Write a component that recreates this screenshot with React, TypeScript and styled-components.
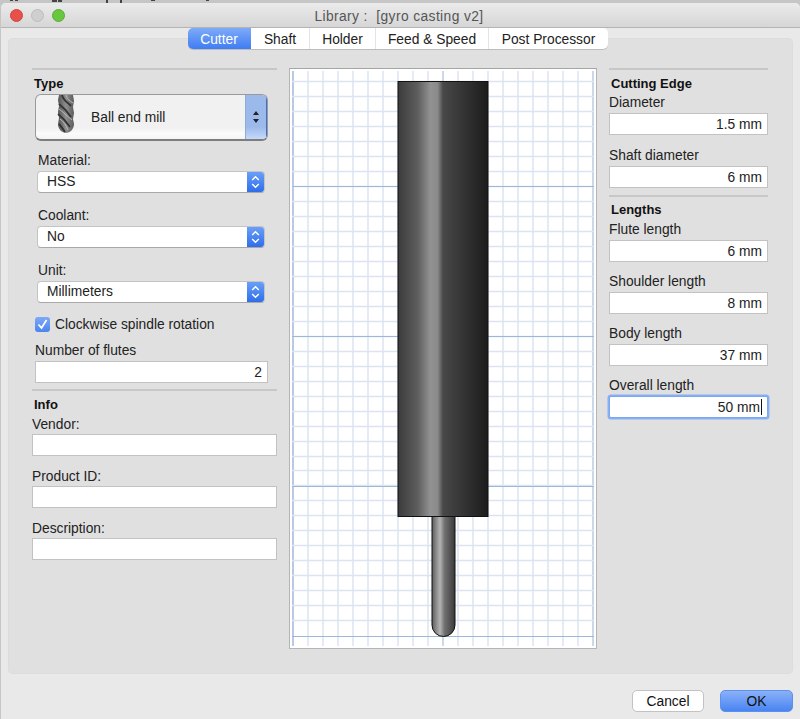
import styled, { createGlobalStyle } from "styled-components";

const GlobalStyle = createGlobalStyle`
  html, body {
    margin: 0;
    padding: 0;
    background: #c6c6c6;
  }
  * {
    box-sizing: border-box;
  }
`;

const TABS = [
  { label: "Cutter", width: 63, active: true },
  { label: "Shaft", width: 59 },
  { label: "Holder", width: 66 },
  { label: "Feed & Speed", width: 113 },
  { label: "Post Processor", width: 119 },
];

const SELECTS = [
  { label: "Material:", value: "HSS" },
  { label: "Coolant:", value: "No" },
  { label: "Unit:", value: "Millimeters" },
];

const MINOR_X = Array.from({ length: 21 }, (_, i) => i * 15 + 3);
const MINOR_Y = Array.from({ length: 37 }, (_, i) => Math.round(i * 14.98 + 12) + 0.5);
const MAJOR_Y = [117.5, 267.5, 417.5, 567.5];

const App = () => {
  return (
    <Screen>
      <GlobalStyle />
      <DesktopPeek viewBox="0 0 800 3">
        <path d="M10 0h3v1h-3zM15 0h3v1h-3zM52 0h5v2h-5zM58 0h4v2h-4zM106 0h2v3h-2zM120 0h2v3h-2zM151 0h4v1h-4zM206 0h3v1h-3z" fill="#444" />
      </DesktopPeek>
      <Window>
        <TitleBar>
          <Lights>
            <Light $color="#e8504a" $edge="#d0433d" />
            <Light $color="#cfcfcf" $edge="#bcbcbc" />
            <Light $color="#68c63f" $edge="#58ad34" />
          </Lights>
          <Title>Library :  [gyro casting v2]</Title>
        </TitleBar>

        <TabBar>
          {TABS.map((tab) => (
            <Tab key={tab.label} $active={tab.active} $width={tab.width}>
              {tab.label}
            </Tab>
          ))}
        </TabBar>

        <Panel>
          <LeftColumn>
            <Divider />
            <Heading $indent={2}>Type</Heading>
            <ToolPopup>
              <FluteIcon viewBox="0 0 18 38">
                <defs>
                  <linearGradient id="fluteBody" x1="0" x2="1" y1="0" y2="0">
                    <stop offset="0" stopColor="#555" />
                    <stop offset="0.5" stopColor="#8f8f8f" />
                    <stop offset="1" stopColor="#5a5a5a" />
                  </linearGradient>
                </defs>
                <path d="M2 0h14l1 6-1 6 1 6-1 6 1 5c0 5-4 9-8 9s-8-4-8-9l1-6-1-6 1-6-1-6z" fill="url(#fluteBody)" />
                <path d="M5 0c1 5 5 7 9 11M2 9c4 3 8 7 12 13M1 19c4 3 8 7 12 13M2 29c2 2 4 5 6 8" fill="none" stroke="#333" strokeWidth="1.8" />
                <path d="M9 0c1 4 4 6 7 8M2 14c4 3 8 7 13 11M3 24c3 2 6 6 8 11" fill="none" stroke="#b8b8b8" strokeWidth="1" />
              </FluteIcon>
              <ToolName>Ball end mill</ToolName>
              <PopupStepper>
                <svg width="8" height="14" viewBox="0 0 8 14">
                  <path d="M4 1l3 4H1zM4 13l3-4H1z" fill="#222" />
                </svg>
              </PopupStepper>
            </ToolPopup>

            {SELECTS.map((select, i) => (
              <div key={select.label}>
                <SelectLabel $top={i === 0 ? 11 : 14}>{select.label}</SelectLabel>
                <Select>
                  <SelectValue>{select.value}</SelectValue>
                  <SelectArrow>
                    <svg width="9" height="14" viewBox="0 0 9 14">
                      <path d="M1.2 5L4.5 1.8 7.8 5M1.2 9l3.3 3.2L7.8 9" fill="none" stroke="#fff" strokeWidth="1.5" />
                    </svg>
                  </SelectArrow>
                </Select>
              </div>
            ))}

            <CheckRow>
              <CheckBox>
                <svg width="11" height="11" viewBox="0 0 11 11">
                  <path d="M1.5 5.5l3 3.5 5-8" fill="none" stroke="#fff" strokeWidth="1.8" />
                </svg>
              </CheckBox>
              Clockwise spindle rotation
            </CheckRow>

            <FieldLabel $top={10} $indent={3}>Number of flutes</FieldLabel>
            <TextBox $narrow>2</TextBox>

            <Divider $top={6} />
            <Heading $indent={2} $top={6}>Info</Heading>
            <FieldLabel $top={3} $gap={2}>Vendor:</FieldLabel>
            <TextBox />
            <FieldLabel $top={12} $gap={2}>Product ID:</FieldLabel>
            <TextBox />
            <FieldLabel $top={12} $gap={2}>Description:</FieldLabel>
            <TextBox />
          </LeftColumn>

          <Preview viewBox="0 0 306 579">
            <defs>
              <linearGradient id="shank" x1="0" x2="1" y1="0" y2="0">
                <stop offset="0" stopColor="#3b3b3b" />
                <stop offset="0.22" stopColor="#5e5e5e" />
                <stop offset="0.36" stopColor="#929292" />
                <stop offset="0.44" stopColor="#8a8a8a" />
                <stop offset="0.5" stopColor="#484848" />
                <stop offset="1" stopColor="#1c1c1c" />
              </linearGradient>
              <linearGradient id="cutter" x1="0" x2="1" y1="0" y2="0">
                <stop offset="0" stopColor="#5c5c5c" />
                <stop offset="0.35" stopColor="#b4b4b4" />
                <stop offset="0.55" stopColor="#707070" />
                <stop offset="1" stopColor="#3a3a3a" />
              </linearGradient>
            </defs>
            {MINOR_X.map((x) => (
              <line key={x} x1={x} x2={x} y1="2" y2="577" stroke={x === 3 || x === 303 ? "#b9cbe2" : "#dbe4f0"} strokeWidth={x === 3 ? 2 : 1.5} />
            ))}
            {MINOR_Y.map((y) => (
              <line key={y} x1="2" x2="304" y1={y} y2={y} stroke="#dbe4f0" strokeWidth="1.4" />
            ))}
            {MAJOR_Y.map((y) => (
              <line key={y} x1="2" x2="304" y1={y} y2={y} stroke="#9db7d9" strokeWidth="1" />
            ))}
            <line x1="153" x2="153" y1="2" y2="577" stroke="#c3d1e3" strokeWidth="1.4" />
            <path d="M142 447h23v109a11.5 11.5 0 0 1-23 0z" fill="url(#cutter)" stroke="#111" strokeWidth="1" />
            <rect x="108" y="12.5" width="90" height="435" fill="url(#shank)" stroke="#111" strokeWidth="1" />
          </Preview>

          <RightColumn>
            <Divider />
            <Heading $indent={2}>Cutting Edge</Heading>
            <FieldLabel $top={2}>Diameter</FieldLabel>
            <TextBox>1.5 mm</TextBox>
            <FieldLabel $top={12}>Shaft diameter</FieldLabel>
            <TextBox>6 mm</TextBox>

            <Divider $top={7} />
            <Heading $indent={2} $top={5}>Lengths</Heading>
            <FieldLabel $top={3}>Flute length</FieldLabel>
            <TextBox>6 mm</TextBox>
            <FieldLabel $top={11}>Shoulder length</FieldLabel>
            <TextBox>8 mm</TextBox>
            <FieldLabel $top={11}>Body length</FieldLabel>
            <TextBox>37 mm</TextBox>
            <FieldLabel $top={11}>Overall length</FieldLabel>
            <TextBox $focused>
              50 mm<Caret />
            </TextBox>
          </RightColumn>
        </Panel>

        <Footer>
          <FooterButton>Cancel</FooterButton>
          <FooterButton $primary>OK</FooterButton>
        </Footer>
      </Window>
    </Screen>
  );
};

export default App;

const Screen = styled.div`
  display: flex;
  flex-direction: column;
  width: 800px;
  height: 719px;
  overflow: hidden;
  font-family: "Liberation Sans", Arial, sans-serif;
  font-size: 13.8px;
  color: #222;
`;

const DesktopPeek = styled.svg`
  display: block;
  flex: none;
  width: 800px;
  height: 3px;
`;

const Window = styled.div`
  flex: 1;
  display: flex;
  flex-direction: column;
  margin-left: 1px;
  background: #e9e9e9;
  border-radius: 5px 5px 0 0;
  overflow: hidden;
`;

const TitleBar = styled.div`
  position: relative;
  flex: none;
  display: flex;
  align-items: center;
  justify-content: center;
  height: 25px;
  background: linear-gradient(#ebebeb, #d6d6d6);
  border-bottom: 1px solid #b4b4b4;
`;

const Lights = styled.div`
  position: absolute;
  left: 9px;
  top: 6px;
  display: flex;
  gap: 8px;
`;

const Light = styled.span<{ $color: string; $edge: string }>`
  width: 13px;
  height: 13px;
  border-radius: 50%;
  background: ${(props) => props.$color};
  border: 1px solid ${(props) => props.$edge};
`;

const Title = styled.div`
  color: #555;
  white-space: pre;
  padding: 2px 3px 0 0;
  letter-spacing: 0.4px;
`;

const TabBar = styled.div`
  position: relative;
  z-index: 1;
  flex: none;
  display: flex;
  height: 21px;
  margin-bottom: -11px;
  padding-left: 187px;
`;

const Tab = styled.button<{ $active?: boolean; $width: number }>`
  width: ${(props) => props.$width}px;
  height: 21px;
  padding: 1px 0 0;
  font: inherit;
  color: ${(props) => (props.$active ? "#fff" : "#222")};
  background: ${(props) => (props.$active ? "linear-gradient(#7eaaf8, #3f7df3)" : "#fff")};
  border: none;
  border-right: 1px solid ${(props) => (props.$active ? "transparent" : "#e4e4e4")};
  box-shadow: 0 1px 0 #bdbdbd;
  &:first-child {
    border-radius: 5px 0 0 5px;
  }
  &:last-child {
    border-right: none;
    border-radius: 0 5px 5px 0;
  }
`;

const Panel = styled.div`
  flex: none;
  display: grid;
  grid-template-columns: 245px 308px 159px;
  column-gap: 12px;
  align-items: start;
  height: 636px;
  margin: 0 7px;
  padding: 30px 0 0 24px;
  background: #e0e0e0;
  border-radius: 5px;
  box-shadow: inset 0 0 0 1px #dcdcdc;
`;

const LeftColumn = styled.div`
  display: flex;
  flex-direction: column;
  align-items: flex-start;
`;

const RightColumn = styled(LeftColumn)``;

const Divider = styled.div<{ $top?: number }>`
  flex: none;
  align-self: stretch;
  height: 2px;
  margin-top: ${(props) => props.$top ?? 0}px;
  background: #c7c7c7;
`;

const Heading = styled.div<{ $indent?: number; $top?: number }>`
  height: 16px;
  line-height: 16px;
  margin: ${(props) => props.$top ?? 6}px 0 0 ${(props) => props.$indent ?? 0}px;
  font-size: 13px;
  font-weight: bold;
  color: #111;
`;

const ToolPopup = styled.div`
  position: relative;
  display: flex;
  align-items: center;
  width: 233px;
  height: 47px;
  margin: 2px 0 0 3px;
  background: linear-gradient(#f1f1f1 74%, #fbfbfb 88%, #f4f4f4);
  border: 1px solid #9a9a9a;
  border-bottom: 2px solid #7d7d7d;
  border-radius: 6px;
  overflow: hidden;
`;

const FluteIcon = styled.svg`
  flex: none;
  width: 18px;
  height: 38px;
  margin: -7px 0 0 21px;
`;

const ToolName = styled.span`
  margin-left: 16px;
`;

const PopupStepper = styled.div`
  margin-left: auto;
  display: flex;
  align-items: center;
  justify-content: center;
  width: 22px;
  height: 100%;
  background: linear-gradient(#9cb9ec 72%, #c5d9fa);
  border-left: 1px solid #8fa9d8;
  border-right: 1px solid #3f6fc4;
`;

const SelectLabel = styled.div<{ $top: number }>`
  height: 16px;
  line-height: 18px;
  margin: ${(props) => props.$top}px 0 0 6px;
`;

const Select = styled.div`
  display: flex;
  width: 228px;
  height: 22px;
  margin: 3px 0 0 5px;
  background: #fff;
  border: 1px solid #c4c4c4;
  border-bottom-color: #a8a8a8;
  border-radius: 4px;
  overflow: hidden;
`;

const SelectValue = styled.div`
  flex: 1;
  line-height: 20px;
  padding-left: 9px;
`;

const SelectArrow = styled.div`
  display: flex;
  align-items: center;
  justify-content: center;
  width: 17px;
  background: linear-gradient(#6a9ff8, #2f6eea);
`;

const CheckRow = styled.label`
  display: flex;
  align-items: center;
  gap: 5px;
  height: 15px;
  margin: 14px 0 0 3px;
`;

const CheckBox = styled.span`
  display: flex;
  align-items: center;
  justify-content: center;
  width: 15px;
  height: 15px;
  border-radius: 3px;
  background: linear-gradient(#7eaaf6, #4a85ee);
`;

const FieldLabel = styled.div<{ $top?: number; $indent?: number; $gap?: number }>`
  height: 16px;
  line-height: 17px;
  margin: ${(props) => props.$top ?? 0}px 0 ${(props) => props.$gap ?? 3}px ${(props) => props.$indent ?? 0}px;
`;

const TextBox = styled.div<{ $narrow?: boolean; $focused?: boolean }>`
  display: flex;
  align-items: center;
  justify-content: flex-end;
  width: ${(props) => (props.$narrow ? "233px" : "100%")};
  height: 22px;
  margin-left: ${(props) => (props.$narrow ? "3px" : "0")};
  padding-right: 5px;
  background: #fff;
  border: 1px solid #c2c2c2;
  ${(props) => props.$focused && "border-color: #7ba6f0; border-radius: 2px; box-shadow: 0 0 0 1.5px #86aff4;"}
`;

const Caret = styled.span`
  width: 1px;
  height: 16px;
  margin-left: 1px;
  background: #111;
`;

const Preview = styled.svg`
  display: block;
  width: 308px;
  height: 581px;
  background: #fff;
  border: 1px solid #b5b5b5;
  border-top-color: #a5a5a5;
`;

const Footer = styled.div`
  flex: none;
  display: flex;
  justify-content: flex-end;
  gap: 16px;
  padding: 16px 7px 0 0;
`;

const FooterButton = styled.button<{ $primary?: boolean }>`
  width: ${(props) => (props.$primary ? "73px" : "72px")};
  height: 22px;
  padding: 0;
  font: inherit;
  color: #111;
  background: ${(props) => (props.$primary ? "linear-gradient(#8ab1f8, #4a84f2)" : "#fff")};
  border: 1px solid ${(props) => (props.$primary ? "#5d90ee" : "#c2c2c2")};
  border-radius: 5px;
`;
